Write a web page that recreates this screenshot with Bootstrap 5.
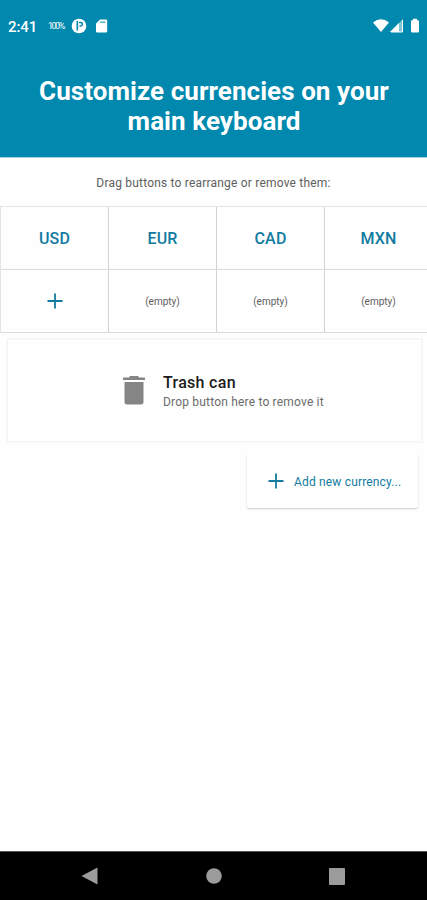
<!DOCTYPE html>
<html lang="en">
<head>
<meta charset="utf-8">
<meta name="viewport" content="width=device-width, initial-scale=1">
<title>Customize currencies</title>
<link href="https://cdn.jsdelivr.net/npm/bootstrap@5.3.0/dist/css/bootstrap.min.css" rel="stylesheet">
<style>
  body { font-family: Roboto, "Liberation Sans", sans-serif; color: #222; }
  svg { display: block; flex: none; }
  .phone { height: 900px; background: #fefefe; }
  .app-head { height: 157px; background: #0088ae; box-shadow: 0 1px 0 #a9d3e1; }
  .status { height: 52px; padding: 0 7px 0 8px; }
  .clock { font-size: 15px; font-weight: 500; letter-spacing: -.1px; line-height: 18px; width: 40px; padding-top: 1px; }
  .percent { font-size: 9px; letter-spacing: -1.5px; line-height: 12px; width: 23px; }
  .title { font-size: 26px; line-height: 30px; font-weight: 700; margin: 24px 0 0; padding-left: 1px; letter-spacing: .06px; }
  .hint { height: 49px; font-size: 12px; letter-spacing: .2px; color: #606060; padding-top: 3px; }
  .keys { display: grid; grid-template-columns: repeat(4, 108px); grid-template-rows: 63px 63px; width: 432px; height: 127px; border-top: 1px solid #e4e4e4; border-left: 1px solid #e4e4e4; }
  .key { border-right: 1.5px solid #d2d2d2; border-bottom: 1.5px solid #dcdcdc; color: #127ba1; font-size: 16px; font-weight: 500; letter-spacing: .2px; padding-top: 2px; }
  .key.vacant { font-size: 10px; font-weight: 400; letter-spacing: 0; color: #606060; padding-top: 1px; }
  .key.plus { padding-top: 0; }
  .trash { height: 105px; margin: 5px 4px 0 6px; border: 2px solid #f6f6f6; padding-left: 115px; border-radius: 2px; gap: 18px; }
  .trash-name { font-size: 16px; line-height: 20px; font-weight: 500; letter-spacing: .3px; color: #1c1c1c; padding-top: 2px; }
  .trash-note { font-size: 12px; line-height: 18px; letter-spacing: .19px; color: #6c6c6c; }
  .add { width: 171px; height: 54px; margin: 11px 9px 0 auto; background: #fff; color: #127ba1; font-size: 12px; letter-spacing: .17px; padding: 0 0 0 21px; gap: 10px; border-radius: 2px; box-shadow: 0 1px 2px rgba(0,0,0,.2); }
  .add span { padding-top: 1px; }
  .navkeys { height: 49px; background: #000; border-top: 1px solid #555; padding: 0 82px 0 81px; }
</style>
</head>
<body>
<div class="phone d-flex flex-column overflow-hidden">
  <header class="app-head text-white text-center flex-shrink-0">
    <div class="status d-flex align-items-center">
      <span class="clock text-start">2:41</span>
      <span class="percent text-start">100%</span>
      <svg width="16" height="16" viewBox="0 0 16 16"><circle cx="8" cy="8" r="7.3" fill="#fff"/><path d="M6.300 3v9.500" stroke="#0088ae" stroke-width="1.600"/><path d="M8 4.500h1.700a1.700 1.700 0 0 1 0 3.400H8.500" fill="none" stroke="#0088ae" stroke-width="1.500"/></svg>
      <svg class="ms-2" width="13" height="16" viewBox="0 0 13 16"><path d="M5 1.500h6q1.200 0 1.200 1.200v10.600q0 1.200-1.200 1.200H2.200Q1 14.500 1 13.300V5.500z" fill="#fff"/><path d="M5 4.200h5.500" stroke="#0088ae" stroke-width="1.500" stroke-opacity=".65"/></svg>
      <svg class="ms-auto" width="47" height="16" viewBox="0 0 47 16"><path d="M0 4.500Q8-1.800 16 4.500L8 14z" fill="#fff"/><path d="M17 14 30 1v13z" fill="#7fc3d7"/><path d="M17 14 26 5v9z" fill="#fff"/><path d="M29.500 2v12H18" fill="none" stroke="#fff"/><path d="M38 3.500q0-1.500 1.500-1.500H40V.8h4V2h.5q1.500 0 1.500 1.500v9.500q0 1.500-1.500 1.500h-5q-1.500 0-1.500-1.500z" fill="#fff"/></svg>
    </div>
    <h1 class="title">Customize currencies on your<br>main keyboard</h1>
  </header>
  <main class="flex-grow-1">
    <p class="hint mb-0 d-flex align-items-center justify-content-center">Drag buttons to rearrange or remove them:</p>
    <div class="keys">
      <div class="key d-flex align-items-center justify-content-center">USD</div>
      <div class="key d-flex align-items-center justify-content-center">EUR</div>
      <div class="key d-flex align-items-center justify-content-center">CAD</div>
      <div class="key d-flex align-items-center justify-content-center">MXN</div>
      <div class="key plus d-flex align-items-center justify-content-center"><svg width="16" height="16" viewBox="0 0 16 16"><path d="M8 .5v15M.5 8h15" stroke="#127ba1" stroke-width="1.800"/></svg></div>
      <div class="key vacant d-flex align-items-center justify-content-center">(empty)</div>
      <div class="key vacant d-flex align-items-center justify-content-center">(empty)</div>
      <div class="key vacant d-flex align-items-center justify-content-center">(empty)</div>
    </div>
    <section class="trash d-flex align-items-center">
      <svg width="22" height="29" viewBox="0 0 22 29"><path d="M0 1.500h6L7 0h8l1 1.500h6v2.500H0zM1.500 6h19v20q0 2.500-2.500 2.500H4q-2.500 0-2.500-2.500z" fill="#858585"/></svg>
      <div class="trash-text">
        <div class="trash-name">Trash can</div>
        <div class="trash-note">Drop button here to remove it</div>
      </div>
    </section>
    <button class="add btn border-0 d-flex align-items-center"><svg width="16" height="16" viewBox="0 0 16 16"><path d="M8 .5v15M.5 8h15" stroke="#127ba1" stroke-width="1.800"/></svg><span>Add new currency...</span></button>
  </main>
  <nav class="navkeys d-flex align-items-center justify-content-between flex-shrink-0">
    <svg width="17" height="18" viewBox="0 0 17 18"><path d="M16.500.5v17L.5 9z" fill="#9b9b9b"/></svg>
    <svg width="16" height="16" viewBox="0 0 16 16"><circle cx="8" cy="8" r="7.800" fill="#9b9b9b"/></svg>
    <svg width="16" height="17" viewBox="0 0 16 17"><rect width="16" height="17" rx="1" fill="#9b9b9b"/></svg>
  </nav>
</div>
<script src="https://cdn.jsdelivr.net/npm/bootstrap@5.3.0/dist/js/bootstrap.bundle.min.js"></script>
</body>
</html>
